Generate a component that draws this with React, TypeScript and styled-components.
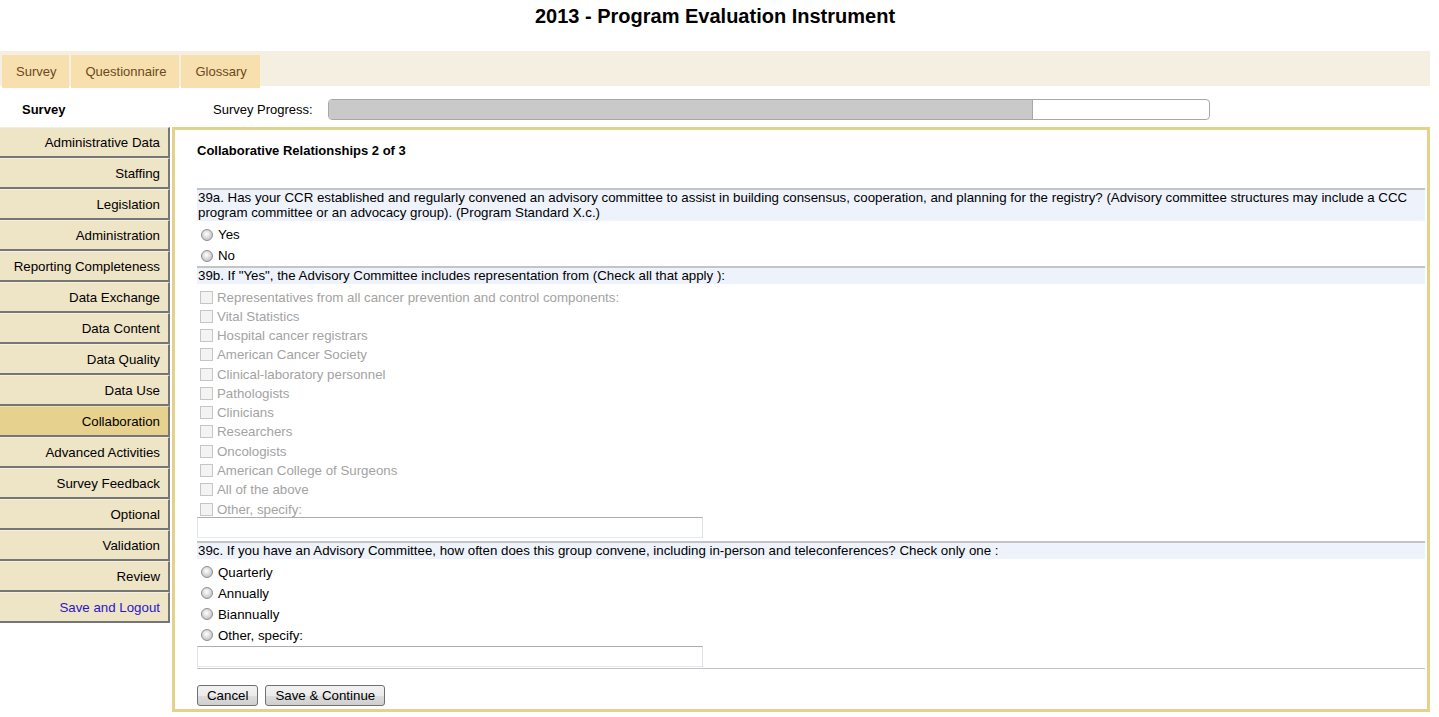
import React, { FC } from "react";
import styled, { createGlobalStyle } from "styled-components";

const GlobalStyle = createGlobalStyle`
	body {
		margin: 0;
		background: #ffffff;
		font-family: "Liberation Sans", Arial, sans-serif;
		font-size: 13.3px;
		color: #000;
	}
`;

const NAV_ITEMS = [
	"Administrative Data",
	"Staffing",
	"Legislation",
	"Administration",
	"Reporting Completeness",
	"Data Exchange",
	"Data Content",
	"Data Quality",
	"Data Use",
	"Collaboration",
	"Advanced Activities",
	"Survey Feedback",
	"Optional",
	"Validation",
	"Review",
	"Save and Logout",
];

const REPRESENTATION = [
	"Representatives from all cancer prevention and control components:",
	"Vital Statistics",
	"Hospital cancer registrars",
	"American Cancer Society",
	"Clinical-laboratory personnel",
	"Pathologists",
	"Clinicians",
	"Researchers",
	"Oncologists",
	"American College of Surgeons",
	"All of the above",
	"Other, specify:",
];

const FREQUENCY = ["Quarterly", "Annually", "Biannually", "Other, specify:"];

const PROGRESS = 80;

interface NavProps {
	$active?: boolean;
	$link?: boolean;
}

interface OptionListProps {
	$top?: number;
}

const App: FC = () => {
	return (
		<Page>
			<GlobalStyle />
			<Title>2013 - Program Evaluation Instrument</Title>
			<TabBar>
				<Tab>Survey</Tab>
				<Tab>Questionnaire</Tab>
				<Tab>Glossary</Tab>
			</TabBar>
			<ProgressRow>
				<SectionLabel>Survey</SectionLabel>
				<ProgressLabel>Survey Progress:</ProgressLabel>
				<ProgressTrack>
					<ProgressFill style={{ width: `${PROGRESS}%` }} />
				</ProgressTrack>
			</ProgressRow>
			<Body>
				<SideNav>
					{NAV_ITEMS.map((item) => (
						<NavItem
							key={item}
							$active={item === "Collaboration"}
							$link={item === "Save and Logout"}
						>
							{item}
						</NavItem>
					))}
				</SideNav>
				<Panel>
					<PanelTitle>Collaborative Relationships 2 of 3</PanelTitle>

					<QuestionHeader>
						39a. Has your CCR established and regularly convened an advisory committee to
						assist in building consensus, cooperation, and planning for the registry?
						(Advisory committee structures may include a CCC program committee or an
						advocacy group). (Program Standard X.c.)
					</QuestionHeader>
					<OptionList $top={3}>
						<RadioRow>
							<Radio type="radio" name="q39a" />
							Yes
						</RadioRow>
						<RadioRow>
							<Radio type="radio" name="q39a" />
							No
						</RadioRow>
					</OptionList>

					<QuestionHeader>
						39b. If "Yes", the Advisory Committee includes representation from (Check all
						that apply ):
					</QuestionHeader>
					<OptionList $top={3.5}>
						{REPRESENTATION.map((item) => (
							<CheckRow key={item}>
								<Check type="checkbox" disabled />
								{item}
							</CheckRow>
						))}
					</OptionList>
					<TextField type="text" disabled $offset={-2} />

					<QuestionHeader $gap={3}>
						39c. If you have an Advisory Committee, how often does this group convene,
						including in-person and teleconferences? Check only one :
					</QuestionHeader>
					<OptionList $top={3}>
						{FREQUENCY.map((item) => (
							<RadioRow key={item}>
								<Radio type="radio" name="q39c" />
								{item}
							</RadioRow>
						))}
					</OptionList>
					<TextField type="text" />

					<Divider />
					<ButtonRow>
						<Button>Cancel</Button>
						<Button>Save &amp; Continue</Button>
					</ButtonRow>
				</Panel>
			</Body>
		</Page>
	);
};

const Page = styled.div`
	width: 1430px;
	font-family: "Liberation Sans", Arial, sans-serif;
`;

const Title = styled.h1`
	margin: 0;
	padding-top: 4px;
	font-size: 20px;
	line-height: 24px;
	font-weight: bold;
	text-align: center;
	color: #000;
`;

const TabBar = styled.div`
	display: flex;
	gap: 2px;
	margin-top: 23px;
	height: 35px;
	padding: 4px 0 0 2px;
	box-sizing: border-box;
	background: #f4efe1;
`;

const Tab = styled.div`
	display: flex;
	align-items: center;
	height: 33px;
	padding: 0 13px 0 14px;
	background: #f8dfae;
	color: #6a4a20;
	font-size: 13px;
	cursor: pointer;
`;

const ProgressRow = styled.div`
	display: flex;
	align-items: center;
	height: 41px;
	padding-top: 6px;
	box-sizing: border-box;
`;

const SectionLabel = styled.div`
	width: 191px;
	padding-left: 22px;
	font-weight: bold;
	font-size: 13px;
`;

const ProgressLabel = styled.div`
	width: 115px;
	font-size: 13px;
`;

const ProgressTrack = styled.div`
	width: 882px;
	height: 21px;
	box-sizing: border-box;
	border: 1px solid #a8a8a8;
	border-radius: 4px;
	background: #ffffff;
	overflow: hidden;
`;

const ProgressFill = styled.div`
	height: 100%;
	background: #c9c9c9;
	border-right: 1px solid #a8a8a8;
	box-sizing: border-box;
`;

const Body = styled.div`
	display: grid;
	grid-template-columns: 170px 1fr;
	column-gap: 2px;
	align-items: start;
`;

const SideNav = styled.nav`
	display: flex;
	flex-direction: column;
`;

const NavItem = styled.div<NavProps>`
	height: 28px;
	margin-bottom: 1px;
	padding-right: 8px;
	display: flex;
	align-items: center;
	justify-content: flex-end;
	background: ${(p) => (p.$active ? "#e6d28e" : "#eee4c6")};
	border-top: 1px solid ${(p) => (p.$active ? "#efe0ad" : "#f6efdb")};
	border-right: 2px solid #767676;
	border-bottom: 2px solid #767676;
	box-sizing: content-box;
	margin-top: -1px;
	font-size: 13.3px;
	color: ${(p) => (p.$link ? "#2a16c8" : "#000")};
	cursor: pointer;

	&:first-child {
		margin-top: 0;
	}
`;

const Panel = styled.section`
	border: 3px solid #e3d18c;
	padding: 13px 2px 3px 22px;
	box-sizing: border-box;
	height: 585px;
`;

const PanelTitle = styled.div`
	font-weight: bold;
	font-size: 13px;
	line-height: 15px;
	margin-bottom: 30px;
`;

const QuestionHeader = styled.div<{ $gap?: number }>`
	margin-top: ${(p) => p.$gap || 0}px;
	border-top: 2px solid #c4c4c4;
	background: #eef3fb;
	padding: 0 1px 1px 1px;
	font-size: 13.3px;
	line-height: 15px;
`;

const OptionList = styled.div<OptionListProps>`
	display: flex;
	flex-direction: column;
	padding-top: ${(p) => p.$top || 0}px;
`;

const RadioRow = styled.label`
	display: flex;
	align-items: center;
	height: 21px;
	font-size: 13.3px;
	color: #000;
`;

const Radio = styled.input`
	appearance: none;
	margin: 0 5px 0 4px;
	width: 12px;
	height: 12px;
	border-radius: 50%;
	border: 1px solid #8c8e90;
	box-sizing: border-box;
	background: radial-gradient(circle at 45% 40%, #ffffff 0, #ececec 25%, #cfcfcf 60%, #b9b9b9 100%);
`;

const CheckRow = styled.label`
	display: flex;
	align-items: center;
	height: 19.27px;
	font-size: 13.3px;
	color: #a3a3a3;
`;

const Check = styled.input`
	appearance: none;
	margin: 0 4px 0 3px;
	width: 13px;
	height: 13px;
	border: 1px solid #c6c6c6;
	box-sizing: border-box;
	background: #f3f3f3;
`;

const TextField = styled.input<{ $offset?: number }>`
	display: block;
	margin: ${(p) => p.$offset || 0}px 0 0 0;
	width: 506px;
	height: 21px;
	box-sizing: border-box;
	border: 1px solid;
	border-color: #abadb3 #dbdfe6 #e3e9ef #e2e3ea;
	background: #ffffff;
	padding: 0 3px;
	font-family: "Liberation Sans", Arial, sans-serif;
	font-size: 13px;
`;

const Divider = styled.hr`
	margin: 1px 0 0 0;
	border: 0;
	border-top: 1px solid #c4c4c4;
	height: 0;
`;

const ButtonRow = styled.div`
	display: flex;
	gap: 7px;
	margin-top: 16px;
`;

const Button = styled.button`
	height: 21px;
	padding: 0 9px;
	border: 1px solid #707070;
	border-radius: 3px;
	background: linear-gradient(#f2f2f2 0%, #ebebeb 50%, #dddddd 51%, #cfcfcf 100%);
	font-family: "Liberation Sans", Arial, sans-serif;
	font-size: 13.3px;
	color: #000;
	cursor: pointer;
`;

export default App;
